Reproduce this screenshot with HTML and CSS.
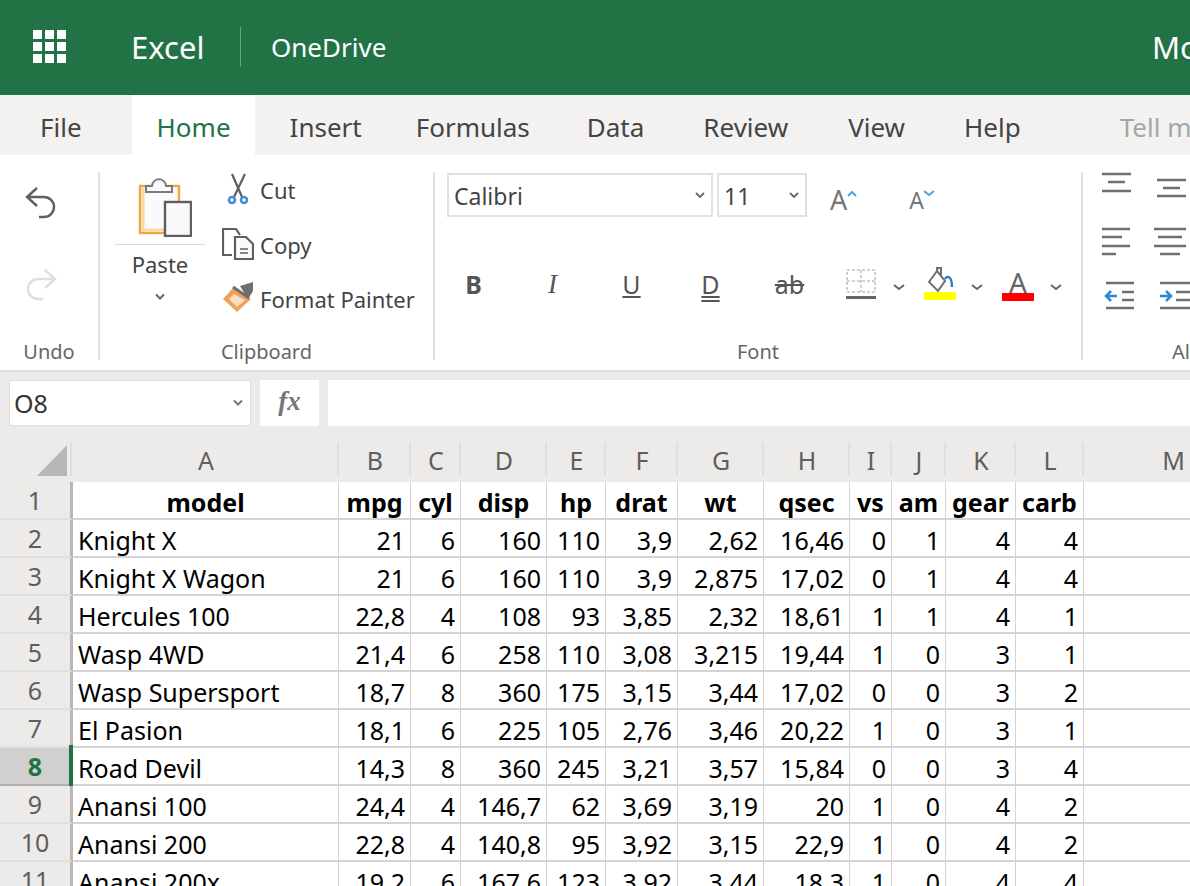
FILE: index.html
```html
<!DOCTYPE html>
<html lang="en">
<head>
  <meta charset="UTF-8" />
  <title>Excel</title>
  <link rel="stylesheet" href="styles.css">
</head>
<body>

  <!-- Top green bar -->
  <header class="appbar">
    <svg class="waffle" width="34" height="34" viewBox="0 0 34 34" fill="#fff">
      <rect x="0" y="0" width="9" height="9"/><rect x="12" y="0" width="9" height="9"/><rect x="24" y="0" width="9" height="9"/>
      <rect x="0" y="12" width="9" height="9"/><rect x="12" y="12" width="9" height="9"/><rect x="24" y="12" width="9" height="9"/>
      <rect x="0" y="24" width="9" height="9"/><rect x="12" y="24" width="9" height="9"/><rect x="24" y="24" width="9" height="9"/>
    </svg>
    <span class="app-name">Excel</span>
    <span class="app-sep"></span>
    <span class="app-place">OneDrive</span>
    <span class="doc-name">Mo</span>
  </header>

  <!-- Tabs -->
  <nav class="tabs">
    <span class="tab tab-file">File</span>
    <span class="tab tab-active">Home</span>
    <span class="tab tab-insert">Insert</span>
    <span class="tab tab-formulas">Formulas</span>
    <span class="tab tab-data">Data</span>
    <span class="tab tab-review">Review</span>
    <span class="tab tab-view">View</span>
    <span class="tab">Help</span>
    <span class="tab tab-tell">Tell me</span>
  </nav>

  <!-- Ribbon -->
  <section class="ribbon">

    <div class="group group-undo">
      <div class="group-body undo-body">
        <svg width="34" height="34" viewBox="0 0 34 34" fill="none" stroke="#5f5f5f" stroke-width="2.4"><path d="M13 1 3 10l10 9M3 10h17a10 10 0 0 1 0 20h-5"/></svg>
        <svg width="34" height="34" viewBox="0 0 34 34" fill="none" stroke="#dedede" stroke-width="2.4"><path d="M21 1l10 9-10 9M31 10H14a10 10 0 0 0 0 20h5"/></svg>
      </div>
      <div class="group-label">Undo</div>
    </div>

    <div class="group group-clip">
      <div class="group-body clip-body">
        <div class="paste">
          <svg width="64" height="65" viewBox="0 0 64 65">
            <rect x="12" y="14" width="39" height="47" fill="#fafafa" stroke="#f2a53f" stroke-width="2.4"/>
            <path d="M15 16v42h24" fill="none" stroke="#fbd9a6" stroke-width="3"/>
            <path d="M18 20v-6h6c1-9 13-9 14 0h6v6z" fill="#fafafa" stroke="#7a7a7a" stroke-width="2"/>
            <rect x="37" y="30" width="26" height="34" fill="#fafafa" stroke="#5f5f5f" stroke-width="2.4"/>
          </svg>
          <div class="paste-rule"></div>
          <div class="paste-label">Paste</div>
          <svg class="paste-caret" width="12" height="8" viewBox="0 0 12 8" fill="none" stroke="#666" stroke-width="2"><path d="M2 1.5l4 4 4-4"/></svg>
        </div>
        <div class="clip-actions">
          <div class="clip-action">
            <svg width="32" height="34" viewBox="0 0 32 34" fill="none"><path d="M10 1l10 23M23 1 12 24" stroke="#5f5f5f" stroke-width="2.2"/><circle cx="10" cy="27" r="3" stroke="#3f8fd2" stroke-width="2.6"/><circle cx="22" cy="27" r="3" stroke="#3f8fd2" stroke-width="2.6"/></svg>
            <span>Cut</span>
          </div>
          <div class="clip-action">
            <svg width="32" height="34" viewBox="0 0 32 34" fill="none" stroke="#5f5f5f" stroke-width="2.2"><path d="M10 27H1V1h13l4 6"/><path d="M13 31V9h11l7 7v15z" fill="#fafafa"/><path d="M18 21h8M18 25h8" stroke-width="1.5"/></svg>
            <span>Copy</span>
          </div>
          <div class="clip-action">
            <svg width="32" height="34" viewBox="0 0 32 34"><path d="M1 17 11 6l18 11-14 13z" fill="#f0a05a"/><path d="M7 17l5-5 11 6-8 7z" fill="#fce0c6"/><path d="M18 4 31 0v9l-5 8z" fill="#6f6f6f"/><path d="M11 5l16 11" stroke="#6f6f6f" stroke-width="3"/></svg>
            <span>Format Painter</span>
          </div>
        </div>
      </div>
      <div class="group-label">Clipboard</div>
    </div>

    <div class="group group-font">
      <div class="group-body font-body">
        <div class="font-row select-row">
          <div class="select select-font"><span>Calibri</span>
            <svg width="10" height="7" viewBox="0 0 10 7" fill="none" stroke="#666" stroke-width="1.8"><path d="M1 1l4 4 4-4"/></svg>
          </div>
          <div class="select select-size"><span>11</span>
            <svg width="10" height="7" viewBox="0 0 10 7" fill="none" stroke="#666" stroke-width="1.8"><path d="M1 1l4 4 4-4"/></svg>
          </div>
          <span class="grow grow-up">A<svg width="10" height="7" viewBox="0 0 10 7" fill="none" stroke="#4aa3df" stroke-width="2"><path d="M1 6l4-4 4 4"/></svg></span>
          <span class="grow grow-down">A<svg width="12" height="7" viewBox="0 0 12 7" fill="none" stroke="#4aa3df" stroke-width="2"><path d="M1 1l5 4 5-4"/></svg></span>
        </div>
        <div class="font-row format-row">
          <span class="fmt fmt-b">B</span>
          <span class="fmt fmt-i">I</span>
          <span class="fmt fmt-u">U</span>
          <span class="fmt fmt-d">D</span>
          <span class="fmt fmt-s">ab</span>
          <svg class="border-icon" width="30" height="30" viewBox="0 0 30 30" fill="none" stroke="#c4c4c4" stroke-width="1.6" stroke-dasharray="3 2"><path d="M1 1h28v22H1zM15 1v22M1 12h28"/><path d="M0 28.5h30" stroke="#666" stroke-width="3" stroke-dasharray="none"/></svg>
          <svg class="caret caret-border" width="12" height="7" viewBox="0 0 12 7" fill="none" stroke="#666" stroke-width="2"><path d="M1 1l5 4 5-4"/></svg>
          <svg class="fill-icon" width="32" height="34" viewBox="0 0 32 34"><path d="M5 15 13 4l8 10-7 10z" fill="#fff" stroke="#6f6f6f" stroke-width="2"/><path d="M13 4V1h4v7" fill="none" stroke="#6f6f6f" stroke-width="2"/><path d="M21 12c2-4 7-3 7 8" fill="none" stroke="#2b7cd3" stroke-width="2.4"/><rect x="0" y="25" width="32" height="8" fill="#ffff00"/></svg>
          <svg class="caret caret-fill" width="12" height="7" viewBox="0 0 12 7" fill="none" stroke="#666" stroke-width="2"><path d="M1 1l5 4 5-4"/></svg>
          <span class="color-a"><span class="color-a-letter">A</span><i></i></span>
          <svg class="caret caret-color" width="12" height="7" viewBox="0 0 12 7" fill="none" stroke="#666" stroke-width="2"><path d="M1 1l5 4 5-4"/></svg>
        </div>
      </div>
      <div class="group-label">Font</div>
    </div>

    <div class="group group-align">
      <div class="group-body">
        <svg width="107" height="140" viewBox="0 0 107 140" stroke="#6f6f6f" stroke-width="2.5" fill="none">
          <path d="M19 2h29M25 10h17M19 19h29"/>
          <path d="M74 8h29M80 16h17M74 24h29"/>
          <path d="M19 57h28M19 65h20M19 74h28M19 82h14"/>
          <path d="M71 57h32M75 65h24M71 74h32M77 82h20"/>
          <path d="M23 111h28M39 120h12M39 128h12M23 136h28"/>
          <path d="M77 111h30M93 120h14M93 128h14M77 136h30"/>
          <path d="M23 124h11M28 119l-5 5 5 5" stroke="#2b88d8"/>
          <path d="M77 124h11M83 119l5 5-5 5" stroke="#2b88d8"/>
        </svg>
      </div>
      <div class="group-label">Al</div>
    </div>
  </section>

  <!-- Formula bar -->
  <section class="formula-bar">
    <div class="namebox"><span>O8</span>
      <svg width="12" height="8" viewBox="0 0 12 8" fill="none" stroke="#777" stroke-width="2"><path d="M2 1.5l4 4 4-4"/></svg>
    </div>
    <div class="fx">fx</div>
    <div class="formula-input"></div>
  </section>

  <!-- Sheet -->
  <div class="sheet-gap"></div>
  <table class="sheet">
    <colgroup>
      <col style="width:73px"><col style="width:266px"><col style="width:72px"><col style="width:50px"><col style="width:86px"><col style="width:59px"><col style="width:72px"><col style="width:86px"><col style="width:86px"><col style="width:42px"><col style="width:54px"><col style="width:70px"><col style="width:68px"><col style="width:179px">
    </colgroup>
    <thead>
      <tr>
        <th class="corner"><div class="corner-tri"></div></th>
        <th>A</th><th>B</th><th>C</th><th>D</th><th>E</th><th>F</th><th>G</th><th>H</th><th>I</th><th>J</th><th>K</th><th>L</th><th>M</th>
      </tr>
    </thead>
    <tbody id="rows"></tbody>
  </table>

  <script>
    // mtcars-style sample data, one row per sheet row
    const data = [
      ['model','mpg','cyl','disp','hp','drat','wt','qsec','vs','am','gear','carb'],
      ['Knight X','21','6','160','110','3,9','2,62','16,46','0','1','4','4'],
      ['Knight X Wagon','21','6','160','110','3,9','2,875','17,02','0','1','4','4'],
      ['Hercules 100','22,8','4','108','93','3,85','2,32','18,61','1','1','4','1'],
      ['Wasp 4WD','21,4','6','258','110','3,08','3,215','19,44','1','0','3','1'],
      ['Wasp Supersport','18,7','8','360','175','3,15','3,44','17,02','0','0','3','2'],
      ['El Pasion','18,1','6','225','105','2,76','3,46','20,22','1','0','3','1'],
      ['Road Devil','14,3','8','360','245','3,21','3,57','15,84','0','0','3','4'],
      ['Anansi 100','24,4','4','146,7','62','3,69','3,19','20','1','0','4','2'],
      ['Anansi 200','22,8','4','140,8','95','3,92','3,15','22,9','1','0','4','2'],
      ['Anansi 200x','19,2','6','167,6','123','3,92','3,44','18,3','1','0','4','4']
    ];

    const rows = document.getElementById('rows');
    data.forEach((row, i) => {
      const tr = document.createElement('tr');
      const head = document.createElement('td');
      head.className = 'rowhead' + (i === 7 ? ' rowhead-active' : '');
      head.textContent = i + 1;
      tr.appendChild(head);
      row.forEach((val, j) => {
        const td = document.createElement('td');
        td.textContent = val;
        if (i === 0) td.className = 'title';
        else if (j > 0) td.className = 'num';
        tr.appendChild(td);
      });
      tr.appendChild(document.createElement('td')).className = 'blank';
      rows.appendChild(tr);
    });
  </script>

</body>
</html>
```

FILE: styles.css
```css
html, body {
  margin: 0;
  height: 886px;
  width: 1190px;
  overflow: hidden;
}

body {
  font-family: "Noto Sans", sans-serif;
  background: #fff;
  color: #444;
}

/* Top bar */
.appbar {
  height: 95px;
  background: #217346;
  color: #fff;
  display: flex;
  align-items: center;
  padding: 0 0 2px 33px;
  box-sizing: border-box;
  white-space: nowrap;
  overflow: hidden;
}
.appbar > * { flex: none; }
.waffle { margin-right: 64px; }
.app-name { font-size: 31px; width: 109px; }
.app-sep {
  width: 1px;
  height: 40px;
  background: #6fa388;
  margin-right: 30px;
}
.app-place { font-size: 26px; width: 881px; }
.doc-name { font-size: 31px; }

/* Tabs */
.tabs {
  height: 60px;
  background: #f3f2f1;
  display: flex;
  align-items: stretch;
  font-size: 26px;
  white-space: nowrap;
  overflow: hidden;
}
.tab {
  padding: 0 29px;
  line-height: 64px;
  color: #444;
}
.tab-file { padding: 0 50px 0 40px; }
.tab-active {
  padding: 0 24px 0 25px;
  background: #fff;
  color: #217346;
}
.tab-insert { padding: 0 25px 0 35px; }
.tab-formulas { padding-right: 28px; }
.tab-data { padding-right: 30px; }
.tab-review { padding-right: 31px; }
.tab-view { padding-right: 30px; }
.tab-tell { color: #a6a6a6; padding-left: 70px; }

/* Ribbon */
.ribbon {
  height: 215px;
  display: flex;
  background: #fff;
  overflow: hidden;
}
.group {
  display: flex;
  flex-direction: column;
  height: 188px;
  margin-top: 17px;
  border-right: 2px solid #e1e1e1;
  box-sizing: border-box;
  flex: none;
}
.group-body { height: 166px; flex: none; }
.group-label {
  height: 28px;
  flex: none;
  text-align: center;
  font-size: 20px;
  color: #666;
  line-height: 28px;
}
.group-undo { width: 100px; }
.group-clip { width: 335px; }
.group-font { width: 648px; }
.group-align { width: 196px; border-right: none; }

.undo-body {
  display: flex;
  flex-direction: column;
  align-items: center;
  padding-top: 15px;
  gap: 48px;
  box-sizing: border-box;
  margin-left: -16px;
}

.clip-body { display: flex; }
.paste {
  width: 90px;
  margin-left: 15px;
  display: flex;
  flex-direction: column;
  align-items: center;
  color: #444;
}
.paste-rule {
  width: 90px;
  height: 1px;
  background: #d8d8d8;
  margin-top: 7px;
  flex: none;
}
.paste-label { font-size: 22px; line-height: 30px; margin-top: 4px; }
.paste-caret { margin-top: 14px; }
.clip-actions {
  margin: -9px 0 0 17px;
  display: flex;
  flex-direction: column;
}
.clip-action {
  display: flex;
  align-items: center;
  gap: 6px;
  height: 54.5px;
  font-size: 22px;
  white-space: nowrap;
  color: #444;
}

.font-body { padding: 1px 0 0 12px; box-sizing: border-box; }
.font-row { display: flex; align-items: center; }
.select-row { height: 44px; align-items: flex-start; }
.select {
  height: 44px;
  border: 2px solid #e1e1e1;
  box-sizing: border-box;
  display: flex;
  align-items: center;
  justify-content: space-between;
  font-size: 23px;
  padding: 1px 6px 0 5px;
  color: #444;
}
.select-font { width: 266px; }
.select-size { width: 90px; margin-left: 4px; }

.grow {
  color: #777;
  display: flex;
  align-items: flex-start;
  height: 34px;
  line-height: 34px;
  margin-top: 10px;
}
.grow svg { margin-top: 7px; }
.grow-up { margin-left: 23px; font-size: 27px; }
.grow-down { margin-left: 52px; font-size: 23px; }
.grow-down svg { margin-left: -1px; }

.format-row { margin-top: 44px; height: 46px; }
.fmt {
  color: #555;
  font-size: 25px;
  width: 79px;
  text-align: center;
  line-height: 34px;
  flex: none;
}
.fmt-b { font-weight: 700; margin-left: -13px; }
.fmt-i { font-style: italic; font-family: "Liberation Serif", serif; font-size: 27px; }
.fmt-u { text-decoration: underline; }
.fmt-d { text-decoration: underline double; }
.fmt-s { text-decoration: line-through; }
.border-icon { margin-left: 17px; flex: none; }
.caret { margin-top: 6px; flex: none; }
.caret-border { margin-left: 17px; }
.fill-icon { margin-left: 19px; flex: none; }
.caret-fill { margin-left: 15px; }
.color-a {
  width: 32px;
  margin-left: 19px;
  display: flex;
  flex-direction: column;
  align-items: center;
  font-size: 28px;
  color: #666;
  line-height: 25px;
  flex: none;
}
.color-a-letter { margin: 2px 0 -2px; }
.color-a i {
  display: block;
  width: 32px;
  height: 8px;
  background: #ff0000;
}
.caret-color { margin-left: 16px; }

/* Formula bar */
.formula-bar {
  height: 57px;
  background: #edebe9;
  border-top: 2px solid #e1dfdd;
  box-sizing: border-box;
  display: flex;
  padding-top: 8px;
  gap: 9px;
}
.namebox, .fx, .formula-input {
  height: 46px;
  background: #fff;
  box-sizing: border-box;
}
.namebox {
  width: 242px;
  margin-left: 9px;
  border: 1px solid #e1dfdd;
  display: flex;
  align-items: center;
  justify-content: space-between;
  padding: 0 6px 0 4px;
  font-size: 25px;
  color: #333;
}
.fx {
  width: 59px;
  text-align: center;
  font-family: "Liberation Serif", serif;
  font-style: italic;
  font-weight: 700;
  font-size: 27px;
  line-height: 42px;
  color: #777;
}
.formula-input { flex: 1; }

.sheet-gap { height: 15px; background: #edebe9; }

/* Sheet */
.sheet {
  table-layout: fixed;
  border-collapse: separate;
  border-spacing: 0;
  width: 1263px;
  font-size: 25px;
  line-height: 30px;
  color: #000;
}
.sheet th {
  height: 40px;
  padding: 0 0 4px;
  background: #edebe9 linear-gradient(#e1dfdd, #e1dfdd) right top / 2px 34px no-repeat;
  color: #605e5c;
  font-weight: 400;
  box-sizing: border-box;
  font-size: 25px;
}
.sheet .corner {
  position: relative;
  background-position: right 1px top;
}
.corner-tri {
  position: absolute;
  right: 6px;
  bottom: 6px;
  width: 0;
  height: 0;
  border-left: 30px solid transparent;
  border-bottom: 31px solid #b7b7b7;
}
.sheet td {
  height: 38px;
  box-sizing: border-box;
  padding: 3px 5px 0;
  border-right: 1px solid #d4d4d4;
  border-bottom: 2px solid #d4d4d4;
  white-space: nowrap;
  overflow: hidden;
}
.sheet td.num { text-align: right; }
.sheet td.title { text-align: center; font-weight: 700; }
.sheet td.blank { border-right: none; }
.sheet td.rowhead {
  position: relative;
  padding: 0;
  background: #edebe9;
  color: #605e5c;
  text-align: center;
  border-right: 3px solid #b7b7b7;
  border-bottom: 2px solid #e1dfdd;
  overflow: visible;
}
.sheet td.rowhead-active {
  background: #d2d0ce;
  color: #217346;
  font-weight: 700;
  border-bottom-color: #b3b0ad;
}
/* green marker of the selected row */
.rowhead-active::after {
  content: "";
  position: absolute;
  right: -3px;
  top: -3px;
  bottom: -3px;
  width: 4px;
  background: #217346;
}
```
